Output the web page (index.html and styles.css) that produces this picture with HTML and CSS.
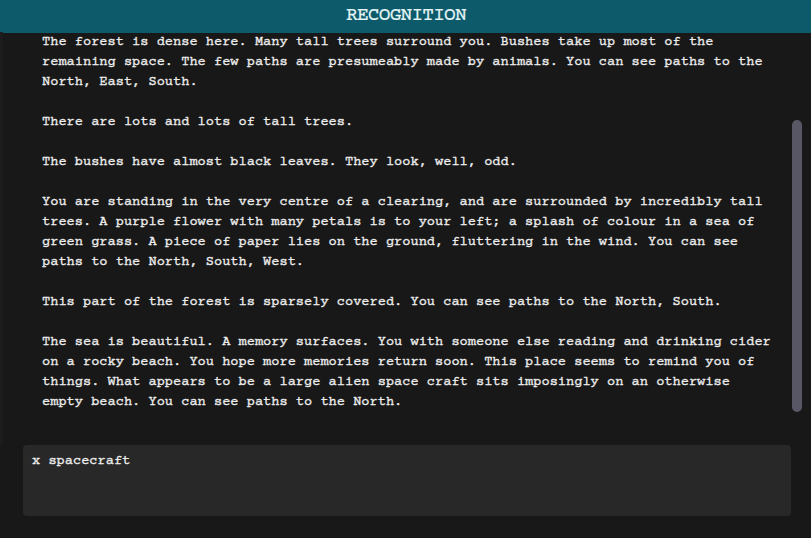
FILE: index.html
```html
<!DOCTYPE html>
<html lang="en">
<head>
<meta charset="utf-8">
<title>Recognition</title>
<link rel="stylesheet" href="styles.css">
</head>
<body>
<header class="title-bar">RECOGNITION</header>
<main class="story">
  <div class="story-text">
    <p>The forest is dense here. Many tall trees surround you. Bushes take up most of the remaining space. The few paths are presumeably made by animals. You can see paths to the North, East, South.</p>
    <p>There are lots and lots of tall trees.</p>
    <p>The bushes have almost black leaves. They look, well, odd.</p>
    <p>You are standing in the very centre of a clearing, and are surrounded by incredibly tall trees. A purple flower with many petals is to your left; a splash of colour in a sea of green grass. A piece of paper lies on the ground, fluttering in the wind. You can see paths to the North, South, West.</p>
    <p>This part of the forest is sparsely covered. You can see paths to the North, South.</p>
    <p>The sea is beautiful. A memory surfaces. You with someone else reading and drinking cider on a rocky beach. You hope more memories return soon. This place seems to remind you of things. What appears to be a large alien space craft sits imposingly on an otherwise empty beach. You can see paths to the North.</p>
  </div>
  <div class="scroll-thumb"></div>
</main>
<div class="command">x spacecraft</div>
</body>
</html>
```

FILE: styles.css
```css
html, body {
  margin: 0;
  padding: 0;
}

body {
  width: 811px;
  height: 538px;
  background: #181818;
  color: #ededed;
  font-family: "Courier Prime", "Nimbus Mono PS", "Nimbus Mono L", "Courier 10 Pitch", "FreeMono", "Liberation Mono", "DejaVu Sans Mono", monospace;
  font-size: 13.67px;
  line-height: 20px;
  -webkit-text-stroke: 0.3px currentColor;
  display: flex;
  flex-direction: column;
  overflow: hidden;
}

.title-bar {
  height: 33px;
  flex: 0 0 33px;
  background: #0d5a6b;
  color: #e4f6f6;
  font-size: 19.5px;
  letter-spacing: -0.8px;
  line-height: 33px;
  text-align: center;
  padding-left: 1px;
  -webkit-text-stroke: 0.2px currentColor;
}

.story {
  flex: 1;
  position: relative;
  overflow: hidden;
  padding: 0 0 0 42px;
  border-left: 3px solid #1c1c1c;
  margin-top: -1px;
}

.story-text {
  width: 734px;
  margin-left: -3px;
}

.story-text p {
  margin: 0 0 20px;
}

.scroll-thumb {
  position: absolute;
  left: 789px;
  top: 88px;
  width: 10px;
  height: 292px;
  border-radius: 5px;
  background: #575766;
}

.command {
  flex: 0 0 71px;
  height: 71px;
  box-sizing: border-box;
  margin: 0 20px 22px 23px;
  padding: 6px 9px;
  background: #282828;
  border-radius: 4px;
  color: #ededed;
}
```
